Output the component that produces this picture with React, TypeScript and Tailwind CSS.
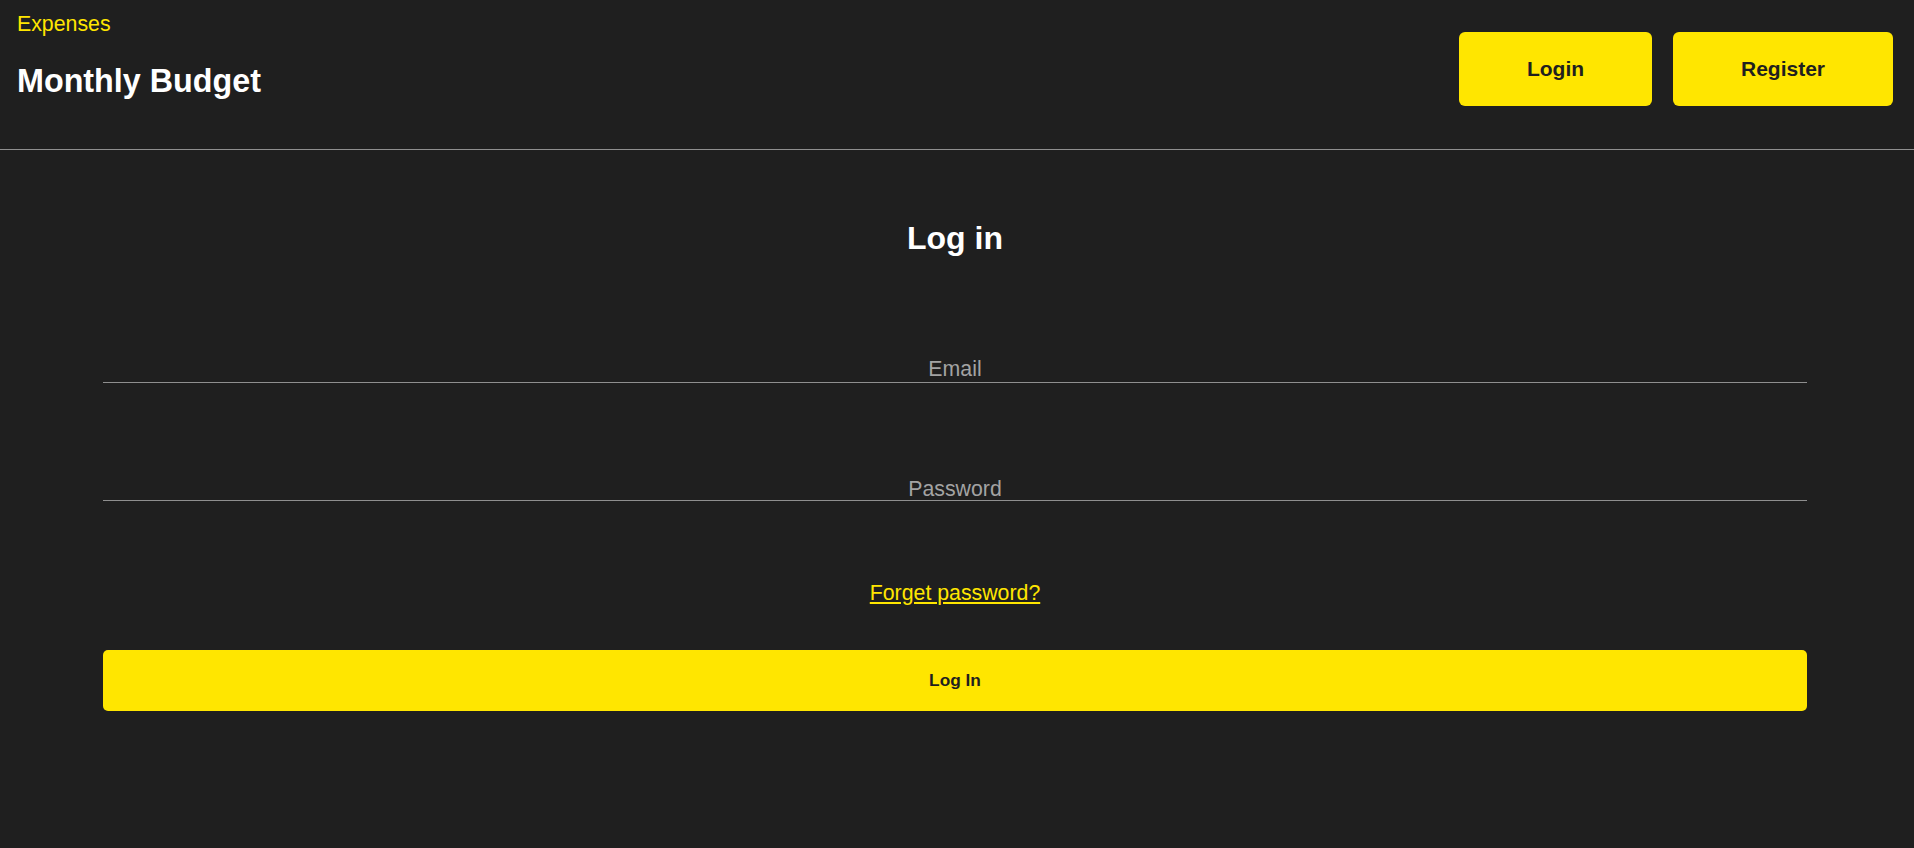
import { useState } from "react";

export default function App() {
  const [email, setEmail] = useState("");
  const [password, setPassword] = useState("");

  return (
    <div className="min-h-[848px] w-full bg-[#1f1f1f] font-['Liberation_Sans',Arial,sans-serif]">
      <header className="flex h-[150px] items-start justify-between border-b border-[#8f8f8f] pl-[17px] pr-[21px]">
        <div className="flex flex-col pt-[12px]">
          <a href="#" className="text-[21.3px] leading-[24px] text-[#ffe600]">
            Expenses
          </a>
          <h1 className="mt-[27px] text-[32.3px] font-bold leading-[36px] text-white">Monthly Budget</h1>
        </div>
        <nav className="mt-[32px] flex gap-[21px]">
          <button className="h-[74px] w-[193px] rounded-[6px] bg-[#ffe600] text-[21px] font-bold text-[#1f1f1f]">
            Login
          </button>
          <button className="h-[74px] w-[220px] rounded-[6px] bg-[#ffe600] text-[21px] font-bold text-[#1f1f1f]">
            Register
          </button>
        </nav>
      </header>

      <main className="flex flex-col pl-[103px] pr-[107px]">
        <h2 className="mt-[70px] text-center text-[32px] font-bold leading-[36px] text-white">Log in</h2>

        <form className="flex flex-col" onSubmit={(e) => e.preventDefault()}>
          <input
            type="email"
            value={email}
            onChange={(e) => setEmail(e.target.value)}
            placeholder="Email"
            className="mt-[102px] h-[25px] w-full border-b border-[#8f8f8f] bg-transparent text-center text-[21.3px] text-white outline-none placeholder:text-[#a3a3a3]"
          />
          <input
            type="password"
            value={password}
            onChange={(e) => setPassword(e.target.value)}
            placeholder="Password"
            className="mt-[93px] h-[25px] w-full border-b border-[#8f8f8f] bg-transparent pt-[4px] text-center text-[21.3px] text-white outline-none placeholder:text-[#a3a3a3]"
          />

          <a href="#" className="mx-auto mt-[80px] text-[21.3px] leading-[24px] text-[#ffe600] underline">
            Forget password?
          </a>

          <button
            type="submit"
            className="mt-[45px] h-[61px] w-full rounded-[5px] bg-[#ffe600] text-[17.3px] font-bold text-[#1f1f1f]"
          >
            Log In
          </button>
        </form>
      </main>
    </div>
  );
}
